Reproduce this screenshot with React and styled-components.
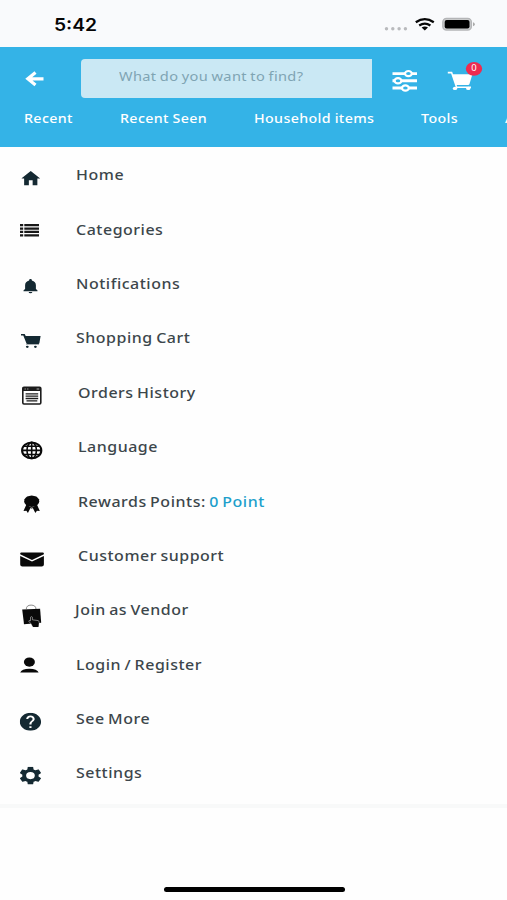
import React from "react";
import styled, { createGlobalStyle } from "styled-components";

const GlobalStyle = createGlobalStyle`
  *, *::before, *::after { box-sizing: border-box; }
  html, body { margin: 0; padding: 0; background: #fefefe; }
  body { width: 507px; height: 900px; overflow: hidden; font-family: "Noto Sans", sans-serif; }
`;

const Screen = styled.div`
  width: 507px;
  height: 900px;
  display: flex;
  flex-direction: column;
  overflow: hidden;
  background: #fefefe;
`;

const StatusBar = styled.div`
  flex: none;
  height: 46.5px;
  display: flex;
  align-items: flex-start;
  justify-content: space-between;
  padding: 12px 32px 0 54px;
  background: #f9fafc;
`;

const Clock = styled.span`
  font: 600 17.2px/25px Inter, sans-serif;
  color: #050505;
  transform: scaleX(1.12);
  transform-origin: left center;
`;

const Header = styled.header`
  flex: none;
  height: 100px;
  background: #34b3e7;
  color: #fff;
`;

const SearchRow = styled.div`
  height: 52px;
  padding-top: 12.5px;
  display: flex;
`;

const HeaderButton = styled.button`
  flex: none;
  width: ${(p) => p.$width}px;
  height: 39px;
  padding: 0;
  border: 0;
  background: none;
  color: inherit;
`;

const SearchField = styled.div`
  flex: none;
  width: 291px;
  height: 39px;
  padding-left: 37.5px;
  border-radius: 4px 0 0 4px;
  background: #cae8f4;
`;

const Stretched = styled.span`
  display: inline-block;
  white-space: nowrap;
  transform: scaleX(1.14);
  transform-origin: left center;
`;

const Placeholder = styled(Stretched)`
  font-size: 12.8px;
  line-height: 35px;
  letter-spacing: 0.3px;
  word-spacing: -0.6px;
  color: #7fa4b3;
`;

const Tabs = styled.nav`
  display: grid;
  grid-template-columns: 95.5px 134.5px 166.5px 84.5px auto;
  padding: 10.5px 0 0 24.3px;
  overflow: hidden;
`;

const Tab = styled(Stretched)`
  font-size: 12.5px;
  font-weight: 500;
  line-height: 20px;
  letter-spacing: 0.32px;
  word-spacing: -0.4px;
`;

const Menu = styled.ul`
  flex: none;
  height: 661px;
  margin: 0;
  padding: 1.1px 0 0;
  list-style: none;
  border-bottom: 4px solid #f8f9f9;
`;

const MenuItem = styled.li`
  height: 54.4px;
  display: flex;
  align-items: center;
  padding-left: 16px;
`;

const MenuIcon = styled.svg`
  flex: none;
  width: 32px;
  height: 32px;
  margin-top: 6px;
  color: ${(p) => p.$color};
  overflow: visible;
`;

const Label = styled(Stretched)`
  margin: 0.8px 0 0 ${(p) => p.$start - 48}px;
  font-size: 14px;
  font-weight: 500;
  line-height: 20px;
  letter-spacing: 0.46px;
  word-spacing: -1.1px;
  color: #3c464b;
`;

const Points = styled.span`
  color: #209fcb;
`;

const HomeBar = styled.div`
  width: 181px;
  height: 5px;
  margin: auto 0 8px 163.5px;
  border-radius: 3px;
  background: #000;
`;

function Glyph({ box, view, d }) {
  const [x, y, width, height] = box;
  return (
    <svg x={x} y={y} width={width} height={height} viewBox={view} preserveAspectRatio="none" fill="currentColor">
      <path d={d} fillRule="evenodd" />
    </svg>
  );
}

const icons = {
  home: <Glyph box={[5.3, 9, 18.9, 14.4]} view="2 3 20 17" d="M10 20v-6h4v6h5v-8h3L12 3 2 12h3v8z" />,
  list: (
    <path
      fill="currentColor"
      d="M4 8h3.2v2.3H4zM8.3 8H23v2.3H8.3zM4 11.4h3.2v2.3H4zM8.3 11.4H23v2.3H8.3zM4 14.8h3.2v2.3H4zM8.3 14.8H23v2.3H8.3zM4 18.3h3.2v2.3H4zM8.3 18.3H23v2.3H8.3z"
    />
  ),
  bell: (
    <Glyph
      box={[7.3, 8, 14.4, 14.5]}
      view="4 2.5 16 19.5"
      d="M12 22c1.1 0 2-.9 2-2h-4c0 1.1.89 2 2 2zm6-6v-5c0-3.07-1.64-5.64-4.5-6.32V4c0-.83-.67-1.5-1.5-1.5s-1.5.67-1.5 1.5v.68C7.63 5.36 6 7.92 6 11v5l-2 2v1h16v-1l-2-2z"
    />
  ),
  cart: (
    <g fill="currentColor">
      <path d="M5 8.9h3.7l1 2h14.9l-1.2 7.2q-.2.9-1.2.9H11.7q-1 0-1.4-1L7.3 10.6H5z" />
      <path d="M10.5 18.6H23v1H10z" opacity=".7" />
      <ellipse cx="11.3" cy="21.8" rx="1.4" ry="1.1" />
      <ellipse cx="19.4" cy="21.8" rx="1.4" ry="1.1" />
    </g>
  ),
  orders: (
    <g fill="none" stroke="currentColor">
      <rect x="6.8" y="8.2" width="18" height="16.8" rx="1.2" strokeWidth="1.6" />
      <path d="M6.8 10h18" strokeWidth="4" />
      <path d="M8.6 10h1.2M11.2 10h1.2M20.6 10h2.6" stroke="#aaa" strokeWidth="1" />
      <path d="M9.6 14.9h12.6M9.6 17.2h12.6M9.6 19.5h12.6M10.5 21.8h10.8" strokeWidth="1.3" />
    </g>
  ),
  globe: (
    <g fill="none" stroke="currentColor" strokeWidth="1.6">
      <ellipse cx="15.7" cy="16.4" rx="9.6" ry="7.9" strokeWidth="2.1" />
      <ellipse cx="15.7" cy="16.4" rx="4.7" ry="8" />
      <path d="M15.7 8.4v16M6 16.4h19.4M7.5 12.3h16.4M7.5 20.5h16.4" />
    </g>
  ),
  award: (
    <g fill="currentColor">
      <path d="M10.3 16.8 7.5 22.9l2.9-.2 1.5 2.3 3-5.8zM21 16.8l2.8 6.1-2.9-.2-1.5 2.3-3-5.8z" />
      <path d="m15.7 7.6 2.4.4 2.2.5 1.4 1.3 1.2 1.5.3 1.9-.3 1.9-1.2 1.5-1.4 1.3-2.2.6-2.4.4-2.4-.4-2.2-.6-1.4-1.3-1.2-1.5-.3-1.9.3-1.9 1.2-1.5 1.4-1.3 2.2-.5z" />
      <path d="m13.4 19.3 2.2-.6 2.4.6-2.3 1.8z" opacity=".6" />
    </g>
  ),
  mail: (
    <path
      fill="currentColor"
      d="M4.2 10.6q0-1 1.2-1h21.3q1.2 0 1.2 1v.7L16 17.1 4.2 11.3zM4.2 12.9 16 18.5l11.9-5.6v8.7q0 2-2.2 2H6.4q-2.2 0-2.2-2z"
    />
  ),
  bag: (
    <g>
      <path d="M10.3 12q.2-3.9 4.8-3.9t4.9 3.9" fill="none" stroke="#8a8a8a" strokeWidth="1" />
      <path d="m6.2 12.6 17.9-.8 1.1 14-17.2 1.4z" fill="currentColor" />
      <path
        d="m15.5 27.4-2.7-3.1q-.2-1.3 1.7-.5v-3.6q.9-1.2 1.9 0v2.6l5.8.8q1 .4.9 1.7l-.9 4.3h-5.4z"
        fill="currentColor"
        stroke="#bbb"
        strokeWidth=".65"
      />
      <path d="m15.8 27.3 7-1.8-.4 4.6h-5.2z" fill="currentColor" />
    </g>
  ),
  user: (
    <g fill="currentColor">
      <ellipse cx="13.4" cy="11.1" rx="5.5" ry="4.6" />
      <path d="M4.2 21.6q1.3-3.9 9.2-3.9t9.2 3.9z" />
    </g>
  ),
  help: (
    <Glyph
      box={[3.8, 6.7, 21.3, 18]}
      view="2 2 20 20"
      d="M12 2C6.48 2 2 6.48 2 12s4.48 10 10 10 10-4.48 10-10S17.52 2 12 2zm1 17h-2v-2h2v2zm2.07-7.75-.9.92C13.45 12.9 13 13.5 13 15h-2v-.5c0-1.1.45-2.1 1.17-2.83l1.24-1.26c.37-.36.59-.86.59-1.41 0-1.1-.9-2-2-2s-2 .9-2 2H8c0-2.21 1.79-4 4-4s4 1.79 4 4c0 .88-.36 1.68-.93 2.25z"
    />
  ),
  gear: (
    <Glyph
      box={[3.8, 6.7, 21.3, 17.8]}
      view="2.2 2 19.6 20"
      d="M19.43 12.98c.04-.32.07-.64.07-.98s-.03-.66-.07-.98l2.11-1.65c.19-.15.24-.42.12-.64l-2-3.46c-.12-.22-.39-.3-.61-.22l-2.49 1c-.52-.4-1.08-.73-1.69-.98l-.38-2.65C14.46 2.18 14.25 2 14 2h-4c-.25 0-.46.18-.49.42l-.38 2.65c-.61.25-1.17.59-1.69.98l-2.49-1c-.23-.09-.49 0-.61.22l-2 3.46c-.13.22-.07.49.12.64l2.11 1.65c-.04.32-.07.65-.07.98s.03.66.07.98l-2.11 1.65c-.19.15-.24.42-.12.64l2 3.46c.12.22.39.3.61.22l2.49-1c.52.4 1.08.73 1.69.98l.38 2.65c.03.24.24.42.49.42h4c.25 0 .46-.18.49-.42l.38-2.65c.61-.25 1.17-.59 1.69-.98l2.49 1c.23.09.49 0 .61-.22l2-3.46c.12-.22.07-.49-.12-.64l-2.11-1.65zM12 16a4 4 0 1 1 0-8 4 4 0 0 1 0 8z"
    />
  ),
};

const navy = "#142932";
const black = "#090909";

const items = [
  { icon: "home", text: "Home", start: 75.8, color: navy },
  { icon: "list", text: "Categories", start: 75.8, color: "#171717" },
  { icon: "bell", text: "Notifications", start: 75.8, color: navy },
  { icon: "cart", text: "Shopping Cart", start: 75.8, color: navy },
  { icon: "orders", text: "Orders History", start: 77.8, color: "#1c1c1c" },
  { icon: "globe", text: "Language", start: 77.8, color: black },
  { icon: "award", text: "Rewards Points: ", points: "0 Point", start: 77.8, color: black },
  { icon: "mail", text: "Customer support", start: 77.8, color: black },
  { icon: "bag", text: "Join as Vendor", start: 75.2, color: black },
  { icon: "user", text: "Login / Register", start: 75.8, color: black },
  { icon: "help", text: "See More", start: 75.8, color: navy },
  { icon: "gear", text: "Settings", start: 75.8, color: navy },
];

const StatusIcons = () => (
  <svg width="92" height="25" viewBox="383 12 92 25">
    <g fill="#b9babd">
      <circle cx="386.5" cy="28.8" r="1.7" />
      <circle cx="392.8" cy="28.8" r="1.7" />
      <circle cx="399.1" cy="28.8" r="1.7" />
      <circle cx="405.4" cy="28.8" r="1.7" />
    </g>
    <g fill="none" stroke="#070707" strokeWidth="2.3">
      <path d="M415.8 22.2q9-6.1 18 0" />
      <path d="M419.2 25.5q5.6-3.6 11.2 0" />
    </g>
    <path d="M421.6 27.5q3.2-2 6.4 0l-3.2 2.9z" fill="#070707" />
    <rect x="442.8" y="18.3" width="28.6" height="11.8" rx="3.7" fill="#c9cacb" stroke="#b4b5b7" strokeWidth="1.3" />
    <rect x="444.7" y="20" width="24.8" height="8.4" rx="2" fill="#000" />
    <path d="M473 22.2q1.8.6 1.8 2t-1.8 2z" fill="#aaa" />
  </svg>
);

const BackIcon = () => (
  <svg width="81" height="39" viewBox="0 59 81 39" fill="none" stroke="#fff" strokeWidth="3.2">
    <path d="M43.5 78.8H28M35.5 72.5l-7.7 6.3 7.7 6.3" />
  </svg>
);

const FilterIcon = () => (
  <svg width="66" height="39" viewBox="372 59 66 39" fill="none" stroke="#fff">
    <path d="M392.5 73.6h24.5M392.5 80.8h24.5M392.5 88h24.5" strokeWidth="2.9" />
    <g fill="#34b3e7" strokeWidth="2.2">
      <ellipse cx="408.4" cy="73.6" rx="3.4" ry="2.6" />
      <ellipse cx="398" cy="80.8" rx="3.4" ry="2.6" />
      <ellipse cx="405.4" cy="88" rx="3.4" ry="2.6" />
    </g>
  </svg>
);

const CartIcon = () => (
  <svg width="69" height="39" viewBox="438 59 69 39">
    <path d="M447.8 72.6h3.8l5 14.7H471" fill="none" stroke="#fff" strokeWidth="1.6" />
    <path d="M452.2 74.2h20.2l-3 10.1q-.3.8-1.3.8h-12.2z" fill="#fff" />
    <ellipse cx="455" cy="88.4" rx="2.2" ry="1.7" fill="#fff" />
    <ellipse cx="468.3" cy="88.4" rx="2.2" ry="1.7" fill="#fff" />
    <ellipse cx="474" cy="68.8" rx="8.2" ry="6.9" fill="#ee2b50" />
    <text x="474" y="71.4" textAnchor="middle" fontSize="9.5" fontFamily="Noto Sans" fill="#fff">0</text>
  </svg>
);

export default function App() {
  return (
    <Screen>
      <GlobalStyle />
      <StatusBar>
        <Clock>5:42</Clock>
        <StatusIcons />
      </StatusBar>
      <Header>
        <SearchRow>
          <HeaderButton $width={81} aria-label="Back"><BackIcon /></HeaderButton>
          <SearchField><Placeholder>What do you want to find?</Placeholder></SearchField>
          <HeaderButton $width={66} aria-label="Filters"><FilterIcon /></HeaderButton>
          <HeaderButton $width={69} aria-label="Cart"><CartIcon /></HeaderButton>
        </SearchRow>
        <Tabs>
          <Tab>Recent</Tab>
          <Tab>Recent Seen</Tab>
          <Tab>Household items</Tab>
          <Tab>Tools</Tab>
          <Tab>A</Tab>
        </Tabs>
      </Header>
      <Menu>
        {items.map((item) => (
          <MenuItem key={item.icon}>
            <MenuIcon viewBox="0 0 32 32" $color={item.color}>{icons[item.icon]}</MenuIcon>
            <Label $start={item.start}>
              {item.text}
              {item.points && <Points>{item.points}</Points>}
            </Label>
          </MenuItem>
        ))}
      </Menu>
      <HomeBar />
    </Screen>
  );
}
